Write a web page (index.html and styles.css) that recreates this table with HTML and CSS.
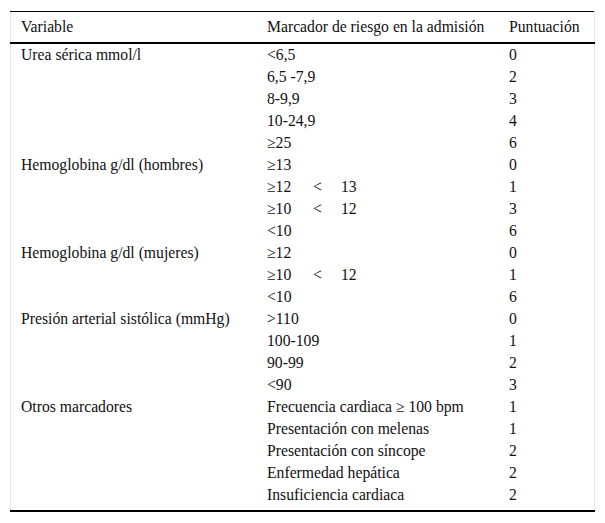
FILE: index.html
```html
<!DOCTYPE html>
<html lang="es">
<head>
<meta charset="utf-8">
<title>Tabla</title>
<link rel="stylesheet" href="styles.css">
</head>
<body>
<div class="wrap">
<table class="score">
<thead>
<tr><th class="c1">Variable</th><th class="c2">Marcador de riesgo en la admisión</th><th class="c3">Puntuación</th></tr>
</thead>
<tbody>
<tr class="first"><td>Urea sérica mmol/l</td><td>&lt;6,5</td><td>0</td></tr>
<tr><td></td><td>6,5 -7,9</td><td>2</td></tr>
<tr><td></td><td>8-9,9</td><td>3</td></tr>
<tr><td></td><td>10-24,9</td><td>4</td></tr>
<tr><td></td><td>≥25</td><td>6</td></tr>
<tr><td>Hemoglobina g/dl (hombres)</td><td>≥13</td><td>0</td></tr>
<tr><td></td><td><span class="a">≥12</span><span class="b">&lt;</span><span>13</span></td><td>1</td></tr>
<tr><td></td><td><span class="a">≥10</span><span class="b">&lt;</span><span>12</span></td><td>3</td></tr>
<tr><td></td><td>&lt;10</td><td>6</td></tr>
<tr><td>Hemoglobina g/dl (mujeres)</td><td>≥12</td><td>0</td></tr>
<tr><td></td><td><span class="a">≥10</span><span class="b">&lt;</span><span>12</span></td><td>1</td></tr>
<tr><td></td><td>&lt;10</td><td>6</td></tr>
<tr><td>Presión arterial sistólica (mmHg)</td><td>&gt;110</td><td>0</td></tr>
<tr><td></td><td>100-109</td><td>1</td></tr>
<tr><td></td><td>90-99</td><td>2</td></tr>
<tr><td></td><td>&lt;90</td><td>3</td></tr>
<tr><td>Otros marcadores</td><td>Frecuencia cardiaca ≥ 100 bpm</td><td>1</td></tr>
<tr><td></td><td>Presentación con melenas</td><td>1</td></tr>
<tr><td></td><td>Presentación con síncope</td><td>2</td></tr>
<tr><td></td><td>Enfermedad hepática</td><td>2</td></tr>
<tr class="last"><td></td><td>Insuficiencia cardiaca</td><td>2</td></tr>
</tbody>
</table>
</div>
</body>
</html>
```

FILE: styles.css
```css
html, body {
  margin: 0;
  padding: 0;
  background: #ffffff;
}
body {
  font-family: "Liberation Serif", "Times New Roman", serif;
  font-size: 15.7px;
  color: #111111;
}
.wrap {
  padding: 11px 0 0 10px;
}
.score {
  width: 585px;
  border-collapse: collapse;
  table-layout: fixed;
  border-left: 1px solid #e4e4e4;
  border-right: 1px solid #e4e4e4;
  border-top: 1px solid #000000;
  border-bottom: 2px solid #000000;
}
.score th {
  font-weight: normal;
  text-align: left;
  height: 30px;
  padding: 0 0 0 10px;
  vertical-align: middle;
  border-bottom: 2px solid #000000;
  white-space: nowrap;
}
.score .c1 { width: 236px; }
.score .c2 { width: 232px; }
.score td {
  height: 22px;
  padding: 0 0 0 10px;
  vertical-align: middle;
  white-space: nowrap;
}
.score tr.last td {
  height: 27px;
  vertical-align: top;
  padding-top: 2px;
  box-sizing: border-box;
}
.a { display: inline-block; width: 46px; }
.b { display: inline-block; width: 28px; }
```
